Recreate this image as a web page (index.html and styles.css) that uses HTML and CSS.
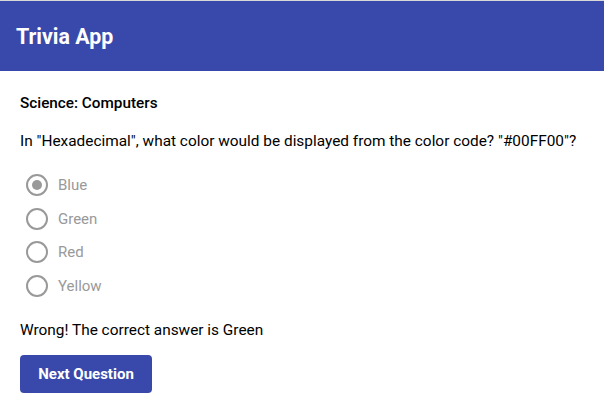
FILE: index.html
```html
<!DOCTYPE html>
<html lang="en">
<head>
    <meta charset="UTF-8">
    <title>Trivia App</title>
    <link rel="stylesheet" href="styles.css">
</head>
<body>
    <header class="app-bar">
        <h1>Trivia App</h1>
    </header>

    <main class="quiz">
        <div class="category">Science: Computers</div>
        <p class="question">In "Hexadecimal", what color would be displayed from the color code? "#00FF00"?</p>

        <div class="answers">
            <label class="answer">
                <span class="radio checked"></span>
                Blue
            </label>
            <label class="answer">
                <span class="radio"></span>
                Green
            </label>
            <label class="answer">
                <span class="radio"></span>
                Red
            </label>
            <label class="answer">
                <span class="radio"></span>
                Yellow
            </label>
        </div>

        <p class="result">Wrong! The correct answer is Green</p>

        <button class="next-btn">Next Question</button>
    </main>
</body>
</html>
```

FILE: styles.css
```css
body {
    font-family: Roboto, "Noto Sans", sans-serif;
    margin: 0;
    background: #fff;
    border-top: 1px solid #d8d8d8;
    color: #000;
}
.app-bar {
    background: #3949ab;
    height: 70px;
    display: flex;
    align-items: center;
    padding: 0 16px;
}
.app-bar h1 {
    margin: 0;
    color: #fff;
    font-size: 21.4px;
    font-weight: 700;
}
.quiz {
    padding: 23px 20px;
}
.category {
    font-size: 15.3px;
    font-weight: 500;
    margin-bottom: 20px;
}
.question {
    font-size: 15.4px;
    margin: 0 0 24px;
}
.answers {
    display: flex;
    flex-direction: column;
    gap: 11.7px;
    padding-left: 6px;
}
.answer {
    display: flex;
    align-items: center;
    gap: 10px;
    font-size: 15px;
    color: #999;
    height: 22px;
}
.radio {
    width: 18px;
    height: 18px;
    border: 2px solid #999;
    border-radius: 50%;
    display: flex;
    align-items: center;
    justify-content: center;
}
.radio.checked::after {
    content: "";
    width: 10px;
    height: 10px;
    border-radius: 50%;
    background: #999;
}
.result {
    font-size: 15.4px;
    margin: 24px 0 16px;
}
.next-btn {
    background: #3949ab;
    color: #fff;
    border: none;
    border-radius: 4px;
    font-family: inherit;
    font-size: 15px;
    font-weight: 700;
    padding: 0 18px;
    height: 38px;
    width: 132px;
}
```
